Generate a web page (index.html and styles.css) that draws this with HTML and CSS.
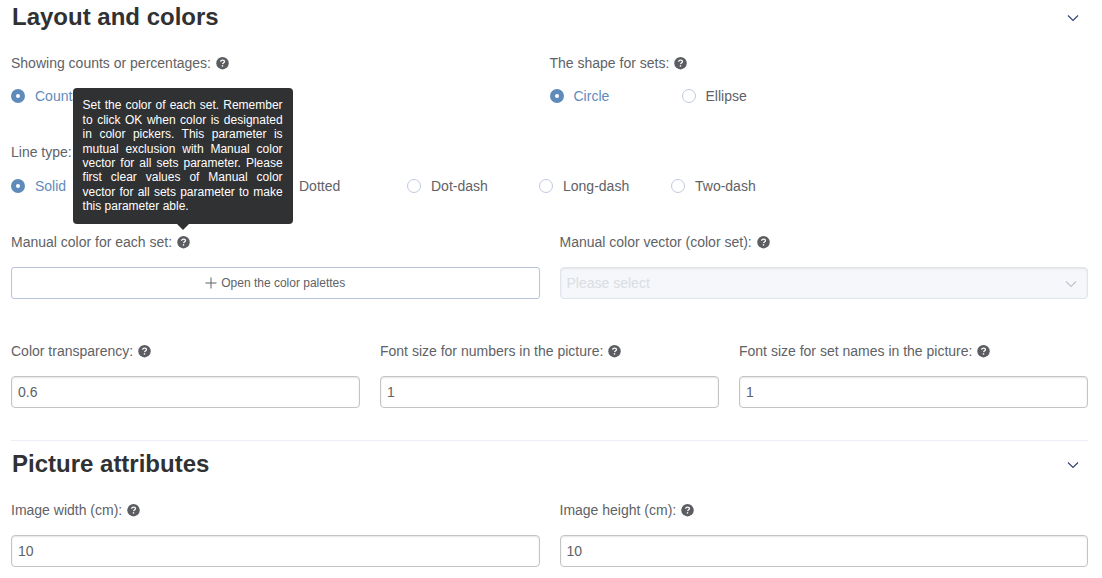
FILE: index.html
```html
<!DOCTYPE html>
<html lang="en">
<head>
<meta charset="utf-8">
<title>Layout and colors</title>
<link rel="stylesheet" href="styles.css">
</head>
<body>
<svg class="symbols" aria-hidden="true">
  <symbol id="help" viewBox="0 0 13 13">
    <circle cx="6.5" cy="6.2" r="6.2" fill="#5b5d61"/>
    <path d="M4.6 4.7c.1-1 .9-1.6 2-1.6s1.9.6 1.9 1.5c0 1.2-1.7 1.2-1.9 2.6" fill="none" stroke="#fff" stroke-width="1.3"/>
    <rect x="5.8" y="8.2" width="1.4" height="1.4" fill="#fff"/>
  </symbol>
  <symbol id="chevron" viewBox="0 0 12 12">
    <path d="M1 3.5l5 5 5-5" fill="none" stroke="currentColor" stroke-width="1.1"/>
  </symbol>
</svg>
<main class="settings">
  <section class="section">
    <header class="section-header">
      <h2 class="section-title">Layout and colors</h2>
      <button class="toggle" type="button" aria-label="Collapse Layout and colors"><svg class="chevron"><use href="#chevron"/></svg></button>
    </header>
    <div class="row row-radios">
      <fieldset class="field">
        <legend class="label">Showing counts or percentages: <svg class="help"><use href="#help"/></svg></legend>
        <div class="radios">
          <label class="radio"><input type="radio" name="show" checked><span>Counts</span></label>
        </div>
      </fieldset>
      <fieldset class="field">
        <legend class="label">The shape for sets: <svg class="help"><use href="#help"/></svg></legend>
        <div class="radios">
          <label class="radio"><input type="radio" name="shape" checked><span>Circle</span></label>
          <label class="radio"><input type="radio" name="shape"><span>Ellipse</span></label>
        </div>
      </fieldset>
    </div>
    <div class="row row-lines">
      <fieldset class="field">
        <legend class="label">Line type: <svg class="help"><use href="#help"/></svg></legend>
        <div class="radios">
          <label class="radio"><input type="radio" name="line" checked><span>Solid</span></label>
          <label class="radio"><input type="radio" name="line"><span>Dashed</span></label>
          <label class="radio"><input type="radio" name="line"><span>Dotted</span></label>
          <label class="radio"><input type="radio" name="line"><span>Dot-dash</span></label>
          <label class="radio"><input type="radio" name="line"><span>Long-dash</span></label>
          <label class="radio"><input type="radio" name="line"><span>Two-dash</span></label>
        </div>
      </fieldset>
    </div>
    <div class="row row-manual gutter">
      <div class="field">
        <div class="label"><label for="palette">Manual color for each set:</label>
          <span class="help-anchor"><svg class="help"><use href="#help"/></svg>
            <span class="tooltip" role="tooltip">Set the color of each set. Remember to click OK when color is designated in color pickers. This parameter is mutual exclusion with Manual color vector for all sets parameter. Please first clear values of Manual color vector for all sets parameter to make this parameter able.</span>
          </span>
        </div>
        <button class="palette-button" id="palette" type="button">
          <svg class="plus" viewBox="0 0 12 12"><path d="M6 .5v11M.5 6h11" stroke="currentColor" fill="none"/></svg>
          Open the color palettes
        </button>
      </div>
      <div class="field">
        <div class="label"><label for="vector">Manual color vector (color set):</label> <svg class="help"><use href="#help"/></svg></div>
        <div class="select-box">
          <select class="control" id="vector" disabled><option>Please select</option></select>
          <svg class="chevron select-arrow"><use href="#chevron"/></svg>
        </div>
      </div>
    </div>
    <div class="row row-sizes gutter">
      <div class="field">
        <div class="label"><label for="alpha">Color transparency:</label> <svg class="help"><use href="#help"/></svg></div>
        <input class="control" id="alpha" type="text" value="0.6">
      </div>
      <div class="field">
        <div class="label"><label for="numbers">Font size for numbers in the picture:</label> <svg class="help"><use href="#help"/></svg></div>
        <input class="control" id="numbers" type="text" value="1">
      </div>
      <div class="field">
        <div class="label"><label for="names">Font size for set names in the picture:</label> <svg class="help"><use href="#help"/></svg></div>
        <input class="control" id="names" type="text" value="1">
      </div>
    </div>
  </section>
  <section class="section section-divided">
    <header class="section-header">
      <h2 class="section-title">Picture attributes</h2>
      <button class="toggle" type="button" aria-label="Collapse Picture attributes"><svg class="chevron"><use href="#chevron"/></svg></button>
    </header>
    <div class="row gutter">
      <div class="field">
        <div class="label"><label for="width">Image width (cm):</label> <svg class="help"><use href="#help"/></svg></div>
        <input class="control" id="width" type="text" value="10">
      </div>
      <div class="field">
        <div class="label"><label for="height">Image height (cm):</label> <svg class="help"><use href="#help"/></svg></div>
        <input class="control" id="height" type="text" value="10">
      </div>
    </div>
  </section>
</main>
</body>
</html>
```
FILE: styles.css
```css
* { box-sizing: border-box; }
body {
  margin: 0;
  background: #fff;
  color: #606266;
  font-family: "Liberation Sans", Arial, sans-serif;
  font-size: 14px;
}
button, input, select { font: inherit; color: inherit; }
.symbols { position: absolute; width: 0; height: 0; }
.settings { padding: 0 14px 0 11px; }
.section-divided { border-top: 1px solid #ebeef5; padding-top: 6px; }
.section-header {
  display: flex;
  align-items: center;
  justify-content: space-between;
  height: 34px;
  margin-bottom: 17px;
  padding: 0 9px 0 1px;
}
.section-title { margin: 0; font-size: 24px; line-height: 34px; color: #303133; }
.toggle {
  display: flex;
  padding: 0;
  margin-top: 2px;
  border: 0;
  background: none;
  color: #303f70;
}
.chevron { width: 12px; height: 12px; }
.row { display: grid; grid-auto-flow: column; grid-auto-columns: minmax(0, 1fr); }
.row-radios { margin-bottom: 36px; }
.row-lines { margin-bottom: 36px; }
.row-lines .label { margin-bottom: 14px; }
.row-manual { margin-bottom: 40px; }
.row-sizes { margin-bottom: 32px; }
.field { min-width: 0; margin: 0; padding: 0; border: 0; }
.gutter .field { padding: 0 10px; }
.gutter .field:first-child { padding-left: 0; }
.gutter .field:last-child { padding-right: 0; }
.label {
  display: flex;
  align-items: center;
  gap: 5px;
  height: 24px;
  margin-bottom: 13px;
  padding: 0;
  white-space: nowrap;
}
.help { display: block; width: 13px; height: 13px; }
.help-anchor { position: relative; }
.radios { display: grid; grid-template-columns: repeat(auto-fill, 132px); height: 16px; }
.radio { display: flex; align-items: center; gap: 10px; }
.radio input {
  appearance: none;
  width: 14px;
  height: 14px;
  margin: 0;
  border: 1px solid #c0c9e0;
  border-radius: 50%;
  background: #fff;
}
.radio input:checked { border: 5px solid #5f8bba; }
.radio input:checked + span { color: #5f8bba; }
.control {
  display: block;
  width: 100%;
  height: 32px;
  padding: 0 6px;
  border: 1px solid #c4c4c4;
  border-radius: 4px;
  background: #fff;
  box-shadow: inset 0 1px 2px #e4e4e4;
}
.select-box { position: relative; }
select.control {
  appearance: none;
  border-color: #e0e4ed;
  background: #f5f7fa;
  color: #dadde3;
  opacity: 1;
}
.select-arrow { position: absolute; right: 11px; top: 11px; color: #c0c4cc; }
.palette-button {
  display: flex;
  align-items: center;
  justify-content: center;
  gap: 4px;
  width: 100%;
  height: 32px;
  padding: 0;
  border: 1px solid #b9c3dc;
  border-radius: 3px;
  background: #fff;
  font-size: 12px;
}
.plus { width: 12px; height: 12px; }
.tooltip {
  position: absolute;
  bottom: calc(100% + 12px);
  left: 50%;
  width: 220px;
  margin-left: -111px;
  padding: 10px;
  border-radius: 4px;
  background: #303133;
  color: #fff;
  font-size: 12px;
  line-height: 1.2;
  text-align: justify;
  white-space: normal;
}
.tooltip::after {
  content: "";
  position: absolute;
  top: 100%;
  left: 50%;
  margin-left: -6px;
  border: 6px solid transparent;
  border-top-color: #303133;
  border-bottom: 0;
}
```
